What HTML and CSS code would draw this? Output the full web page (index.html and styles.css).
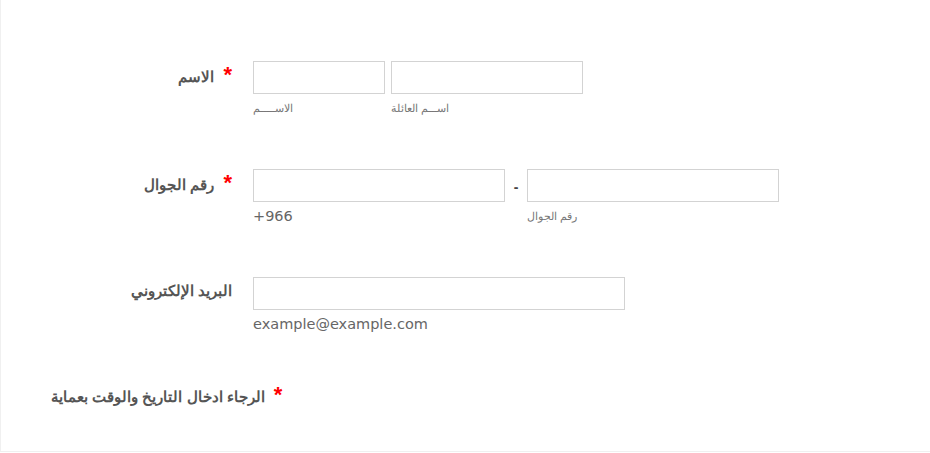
FILE: index.html
```html
<!DOCTYPE html>
<html lang="ar">
<head>
    <meta charset="UTF-8">
    <meta name="viewport" content="width=device-width, initial-scale=1.0">
    <title>نموذج التسجيل</title>
    <link rel="stylesheet" href="styles.css">
</head>
<body>
    <div class="form-all">
        <form id="regForm">
            <div class="form-line">
                <label class="form-label" for="firstName">الاسم<span class="form-required">*</span></label>
                <div class="form-input">
                    <span class="sub-field">
                        <input type="text" id="firstName" class="input-first">
                        <span class="sub-label">الاســـــم</span>
                    </span>
                    <span class="sub-field">
                        <input type="text" id="lastName" class="input-last">
                        <span class="sub-label">اســـم العائلة</span>
                    </span>
                </div>
            </div>

            <div class="form-line">
                <label class="form-label" for="phone">رقم الجوال<span class="form-required">*</span></label>
                <div class="form-input phone">
                    <span class="sub-field">
                        <input type="tel" id="areaCode" class="input-phone">
                        <span class="sub-label latin">+966</span>
                    </span>
                    <span class="phone-sep">-</span>
                    <span class="sub-field">
                        <input type="tel" id="phone" class="input-phone">
                        <span class="sub-label">رقم الجوال</span>
                    </span>
                </div>
            </div>

            <div class="form-line">
                <label class="form-label" for="email">البريد الإلكتروني</label>
                <div class="form-input">
                    <span class="sub-field">
                        <input type="email" id="email" class="input-email">
                        <span class="sub-label latin">example@example.com</span>
                    </span>
                </div>
            </div>

            <div class="form-line last">
                <label class="form-label" for="dateTime">الرجاء ادخال التاريخ والوقت بعماية<span class="form-required">*</span></label>
            </div>
        </form>
    </div>
</body>
</html>
```

FILE: styles.css
```css
/* Form layout */
body {
    margin: 0;
    font-family: "Liberation Sans", Arial, sans-serif;
    background: #fff;
}
.form-all {
    height: 452px;
    border-left: 1px solid #f0f0f0;
    border-bottom: 1px solid #f0f0f0;
    padding: 61px 0 0 50px;
    box-sizing: border-box;
    overflow: hidden;
}
.form-line {
    display: flex;
    align-items: flex-start;
    padding-bottom: 53px;
}
.form-label {
    width: 181px;
    flex-shrink: 0;
    margin-right: 21px;
    padding-top: 4px;
    text-align: right;
    white-space: nowrap;
    font-size: 15px;
    font-weight: bold;
    line-height: 20px;
    color: #555;
}
.form-line.last .form-label {
    padding-top: 0;
}
.form-required {
    color: #f00;
    font-size: 22px;
    line-height: 20px;
    margin-left: 9px;
}
.form-input {
    display: flex;
    align-items: flex-start;
    gap: 6px;
}
.form-input.phone {
    gap: 0;
}
.sub-field {
    display: flex;
    flex-direction: column;
    align-items: flex-start;
}
input {
    height: 33px;
    box-sizing: border-box;
    border: 1px solid #d3d3d3;
    padding: 4px;
    margin: 0;
    background: #fff;
}
.input-first {
    width: 132px;
}
.input-last {
    width: 192px;
}
.input-phone {
    width: 252px;
}
.input-email {
    width: 372px;
}
.phone-sep {
    width: 22px;
    text-align: center;
    line-height: 36px;
    color: #444;
    font-size: 14px;
    font-weight: bold;
}
.sub-label {
    margin-top: 7px;
    font-size: 11px;
    line-height: 15px;
    color: #777;
}
.sub-label.latin {
    font-family: "DejaVu Sans", sans-serif;
    font-size: 14.5px;
    color: #666;
}
```
